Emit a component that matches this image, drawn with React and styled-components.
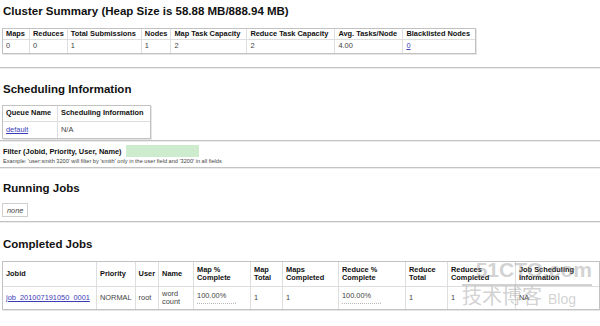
import React from "react";
import styled, { createGlobalStyle } from "styled-components";

const GlobalStyle = createGlobalStyle`
  body {
    margin: 0;
    background: #ffffff;
    font-family: "Liberation Sans", Arial, sans-serif;
    color: #222;
  }
`;

const Page = styled.div`
  position: relative;
  width: 600px;
  height: 326px;
  overflow: hidden;
  padding-left: 2px;
  box-sizing: border-box;
`;

const Heading = styled.h1`
  font-size: 11.5px;
  line-height: 14px;
  font-weight: bold;
  color: #111;
  margin: ${(p) => p.$top}px 0 0 1px;
  white-space: nowrap;
`;

const Rule = styled.div`
  margin: ${(p) => p.$top}px -2px 0;
  border-top: 1px solid #c4c4c4;
  border-bottom: 1px solid #ececec;
`;

const Table = styled.table`
  margin-top: ${(p) => p.$top}px;
  border-collapse: separate;
  border-spacing: 0;
  border: 1px solid #c2c2c2;
  box-shadow: 1px 1px 0 #e6e6e6;
  font-size: 7.4px;
  table-layout: fixed;
`;

const Th = styled.th`
  width: ${(p) => p.$w}px;
  height: ${(p) => p.$h}px;
  padding: 0 3px;
  box-sizing: border-box;
  text-align: left;
  font-weight: bold;
  color: #111;
  line-height: 8.5px;
  border-right: 1px solid #dedede;
  border-bottom: 1px solid #dedede;
  &:last-child {
    border-right: none;
  }
`;

const Td = styled.td`
  height: ${(p) => p.$h}px;
  padding: 0 3px;
  box-sizing: border-box;
  color: #444;
  line-height: 8.5px;
  border-right: 1px solid #dedede;
  &:last-child {
    border-right: none;
  }
`;

const Link = styled.a`
  color: #3b3bb8;
  text-decoration: underline;
`;

const FilterRow = styled.div`
  display: flex;
  align-items: center;
  gap: 4px;
  margin: 3px 0 0 1px;
`;

const FilterLabel = styled.span`
  font-size: 7.4px;
  font-weight: bold;
  color: #111;
  white-space: nowrap;
`;

const FilterInput = styled.div`
  width: 73px;
  height: 12px;
  background: #cdeccd;
`;

const Example = styled.div`
  font-size: 5.6px;
  color: #444;
  margin: 1px 0 0 1px;
  white-space: nowrap;
`;

const NoneBox = styled.div`
  display: inline-flex;
  align-items: center;
  margin-top: ${(p) => p.$top}px;
  height: 12px;
  padding: 0 4px;
  border: 1px solid #cfcfcf;
  font-size: 7.4px;
  font-style: italic;
  color: #444;
`;

const Percent = styled.div`
  display: flex;
  flex-direction: column;
  gap: 2px;
`;

const Bar = styled.div`
  width: 38px;
  height: 1px;
  border-bottom: 1px dotted #b8b8b8;
  border-right: 1px solid #d0d0d0;
`;

const Watermark = styled.div`
  position: absolute;
  left: 462px;
  top: 256px;
  width: 130px;
  pointer-events: none;
  color: rgba(140, 140, 140, 0.4);
  font-family: "Liberation Sans", Arial, sans-serif;
`;

const WmTop = styled.div`
  font-size: 21px;
  font-weight: bold;
  line-height: 28px;
  text-align: right;
  white-space: nowrap;
  border-bottom: 2px solid rgba(140, 140, 140, 0.4);
`;

const WmBottom = styled.div`
  display: flex;
  align-items: baseline;
  gap: 6px;
  margin-top: -2px;
`;

const WmCjk = styled.span`
  font-family: "Noto Sans CJK SC", sans-serif;
  font-size: 20px;
  line-height: 24px;
`;

const WmBlog = styled.span`
  font-size: 14px;
`;

const clusterCols = [
  ["Maps", 27, "0"],
  ["Reduces", 37, "0"],
  ["Total Submissions", 74, "1"],
  ["Nodes", 28, "1"],
  ["Map Task Capacity", 76, "2"],
  ["Reduce Task Capacity", 88, "2"],
  ["Avg. Tasks/Node", 68, "4.00"],
  ["Blacklisted Nodes", 72, "link:0"],
];

const jobCols = [
  ["Jobid", 94],
  ["Priority", 38],
  ["User", 22],
  ["Name", 35],
  ["Map % Complete", 57],
  ["Map Total", 32],
  ["Maps Completed", 56],
  ["Reduce % Complete", 67],
  ["Reduce Total", 42],
  ["Reduces Completed", 68],
  ["Job Scheduling Information", 83],
];

const App = () => (
  <Page>
    <GlobalStyle />
    <Heading $top={4}>Cluster Summary (Heap Size is 58.88 MB/888.94 MB)</Heading>
    <Table $top={10}>
      <thead>
        <tr>
          {clusterCols.map(([name, w]) => (
            <Th key={name} $w={w} $h={11}>
              {name}
            </Th>
          ))}
        </tr>
      </thead>
      <tbody>
        <tr>
          {clusterCols.map(([name, , value]) => (
            <Td key={name} $h={13}>
              {value.startsWith("link:") ? <Link>{value.slice(5)}</Link> : value}
            </Td>
          ))}
        </tr>
      </tbody>
    </Table>

    <Rule $top={13} />
    <Heading $top={13}>Scheduling Information</Heading>
    <Table $top={9}>
      <thead>
        <tr>
          <Th $w={55} $h={16}>Queue Name</Th>
          <Th $w={92} $h={16}>Scheduling Information</Th>
        </tr>
      </thead>
      <tbody>
        <tr>
          <Td $h={16}>
            <Link>default</Link>
          </Td>
          <Td $h={16}>N/A</Td>
        </tr>
      </tbody>
    </Table>

    <Rule $top={1} />
    <FilterRow>
      <FilterLabel>Filter (Jobid, Priority, User, Name)</FilterLabel>
      <FilterInput />
    </FilterRow>
    <Example>
      Example: 'user:smith 3200' will filter by 'smith' only in the user field and '3200' in all fields
    </Example>
    <Rule $top={3} />

    <Heading $top={12}>Running Jobs</Heading>
    <NoneBox $top={8}>none</NoneBox>
    <Rule $top={4} />

    <Heading $top={14}>Completed Jobs</Heading>
    <Table $top={10}>
      <thead>
        <tr>
          {jobCols.map(([name, w]) => (
            <Th key={name} $w={w} $h={25}>
              {name}
            </Th>
          ))}
        </tr>
      </thead>
      <tbody>
        <tr>
          <Td $h={22}>
            <Link>job_201007191050_0001</Link>
          </Td>
          <Td $h={22}>NORMAL</Td>
          <Td $h={22}>root</Td>
          <Td $h={22}>
            word
            <br />
            count
          </Td>
          <Td $h={22}>
            <Percent>
              100.00%
              <Bar />
            </Percent>
          </Td>
          <Td $h={22}>1</Td>
          <Td $h={22}>1</Td>
          <Td $h={22}>
            <Percent>
              100.00%
              <Bar />
            </Percent>
          </Td>
          <Td $h={22}>1</Td>
          <Td $h={22}>1</Td>
          <Td $h={22}>NA</Td>
        </tr>
      </tbody>
    </Table>

    <Watermark>
      <WmTop>51CTO.com</WmTop>
      <WmBottom>
        <WmCjk>技术博客</WmCjk>
        <WmBlog>Blog</WmBlog>
      </WmBottom>
    </Watermark>
  </Page>
);

export default App;
